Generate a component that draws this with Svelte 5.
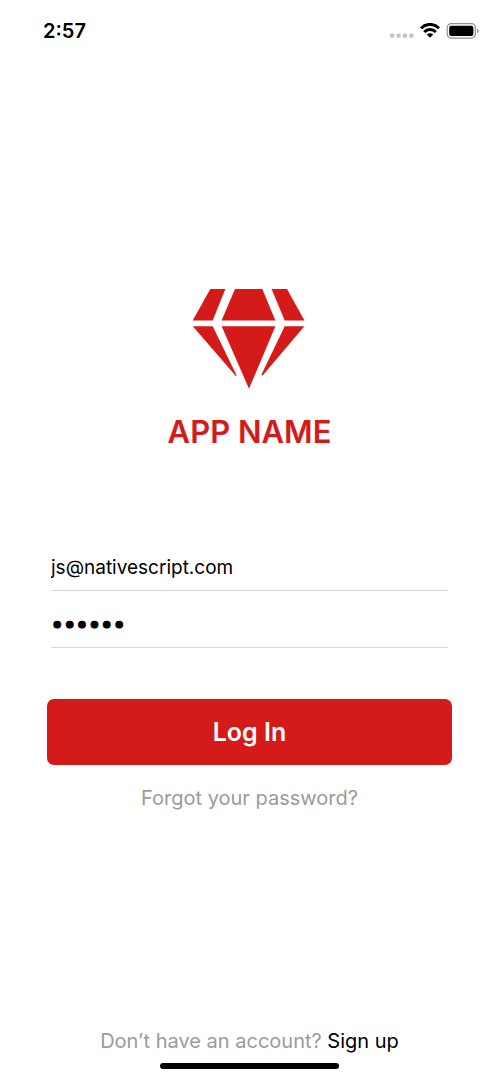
<script>
  let email = $state('js@nativescript.com');
  let password = $state('secret');
</script>

<div class="screen">
  <header class="status">
    <time>2:57</time>
    <div class="indicators">
      <svg width="24" height="16" viewBox="0 0 24 16" fill="#c4c4c4" aria-hidden="true">
        <rect x="0" y="10.5" width="4.3" height="4.3" rx="1.5" />
        <rect x="6.4" y="10.5" width="4.3" height="4.3" rx="1.5" />
        <rect x="12.8" y="10.5" width="4.3" height="4.3" rx="1.5" />
        <rect x="19.2" y="10.5" width="4.3" height="4.3" rx="1.5" />
      </svg>
      <svg width="20" height="16" viewBox="0 0 20 16" fill="none" stroke="#000" stroke-width="3" aria-hidden="true">
        <path d="M1 5.3 C6 .1 14 .1 19 5.3" />
        <path d="M4.2 9 C7.5 5.7 12.5 5.7 15.8 9" />
        <path d="M6.8 11.6 C8.6 9.8 11.4 9.8 13.2 11.6 L10 14.8Z" fill="#000" stroke="none" />
      </svg>
      <svg width="33" height="16" viewBox="0 0 33 16" aria-hidden="true">
        <rect x="1.2" y=".7" width="28.2" height="14.4" rx="4" fill="none" stroke="#909090" stroke-width="1.2" />
        <rect x="3.2" y="2.7" width="24.2" height="10.4" rx="2" />
        <path d="M31.2 5.4c2 .8 2 4.2 0 5Z" fill="#909090" />
      </svg>
    </div>
  </header>

  <main>
    <svg class="logo" width="115" height="101" viewBox="0 0 115 101" fill="#d51a1a" aria-hidden="true">
      <path d="M18.3 1H33.4L20.7 32.4H.7Z" />
      <path d="M43 1H70.3L83.4 32.4H29.6Z" />
      <path d="M79.6 1H95L112.5 32.4H92.7Z" />
      <path d="M.8 38.2H20.7L44.8 87.8H43.6Z" />
      <path d="M29.7 38.2H83.4L57 100.8Z" />
      <path d="M92.7 38.2H112.4L70.4 87.8L69.4 86.8Z" />
    </svg>
    <h1>APP NAME</h1>

    <form onsubmit={(e) => e.preventDefault()}>
      <input type="email" aria-label="Email" bind:value={email} />
      <input type="password" aria-label="Password" bind:value={password} />
      <button type="submit">Log In</button>
    </form>
    <a class="forgot" href="#forgot">Forgot your password?</a>
  </main>

  <footer>
    <p>Don’t have an account? <a href="#signup">Sign up</a></p>
    <div class="home"></div>
  </footer>
</div>

<style>
  :global(body) {
    margin: 0;
    background: #fff;
  }
  .screen {
    box-sizing: border-box;
    min-height: 100vh;
    display: flex;
    flex-direction: column;
    font-family: Inter, 'Liberation Sans', sans-serif;
    font-size: 20px;
    line-height: 24px;
    color: #000;
  }
  .status {
    display: flex;
    justify-content: space-between;
    align-items: center;
    padding: 19px 20px 0 43px;
  }
  time {
    font-weight: 600;
  }
  .indicators {
    display: flex;
    align-items: center;
    gap: 6px;
  }
  svg {
    display: block;
  }
  main {
    flex: 1;
    display: flex;
    flex-direction: column;
    align-items: center;
    justify-content: center;
    padding: 25px 47px 0;
  }
  h1 {
    margin: 23px 0 0;
    font-size: 31px;
    line-height: 40px;
    font-weight: 600;
    color: #d51a1a;
  }
  form {
    align-self: stretch;
    display: flex;
    flex-direction: column;
    margin-top: 82px;
  }
  input {
    box-sizing: border-box;
    height: 57px;
    margin: 0 4px;
    padding: 20px 0 8px;
    border: 0;
    border-bottom: 1px solid #d6d6d6;
    border-radius: 0;
    outline: 0;
    background: none;
    font: inherit;
    font-size: 19px;
    color: inherit;
  }
  input[type='password'] {
    padding-top: 16px;
    font-size: 22px;
    -webkit-text-stroke: 1px #000;
  }
  button {
    height: 66px;
    margin-top: 51px;
    border: 0;
    border-radius: 7px;
    background: #d51a1a;
    color: #fff;
    font: inherit;
    font-size: 25px;
    font-weight: 600;
  }
  a {
    color: inherit;
    text-decoration: none;
  }
  .forgot {
    margin-top: 21px;
    color: #9b9b9b;
  }
  footer {
    display: flex;
    flex-direction: column;
    align-items: center;
    gap: 10px;
    padding-bottom: 11px;
  }
  p {
    margin: 0;
    color: #9b9b9b;
  }
  p a {
    color: #000;
  }
  .home {
    width: 36%;
    height: 6px;
    border-radius: 3px;
    background: #000;
  }
</style>
